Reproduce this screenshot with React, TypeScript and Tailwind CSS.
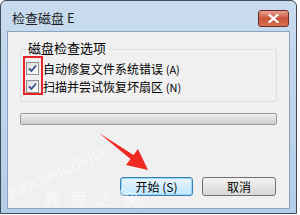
import React from 'react';

const font = { fontFamily: '"Noto Sans CJK SC", "Liberation Sans", sans-serif' };

function CheckRow({ label, hotkey }: { label: string; hotkey: string }) {
  return (
    <div className="flex items-center gap-[4px] h-[17px]">
      <div className="w-[13px] h-[13px] border border-[#8f8f8f] bg-gradient-to-br from-[#dcdcdc] to-[#ffffff] flex items-center justify-center">
        <svg width="9" height="9" viewBox="0 0 9 9">
          <path d="M1 4.5 L3.5 7 L8 1.5" stroke="#3a4f8f" strokeWidth="1.8" fill="none" />
        </svg>
      </div>
      <span className="text-[12px] leading-none text-black">
        {label} <span className="text-[11px]">{hotkey}</span>
      </span>
    </div>
  );
}

export default function App() {
  return (
    <div className="w-[300px] h-[215px] bg-white relative overflow-hidden" style={font}>
      {/* window frame */}
      <div className="w-[297px] h-[214px] rounded-t-[6px] border border-[#3c4a5a] bg-gradient-to-b from-[#c9dcef] to-[#b4cde8] flex flex-col">
        <div className="h-[30px] flex items-center justify-between pl-[11px] pr-[7px]">
          <span className="text-[13px] text-[#1e1e1e] pt-[4px]">检查磁盘 E</span>
          <div className="w-[31px] h-[17px] mt-[4px] rounded-[3px] border border-[#6b2a22] bg-gradient-to-b from-[#e8a293] via-[#c9533c] to-[#d6734f] flex items-center justify-center">
            <svg width="11" height="9" viewBox="0 0 11 9">
              <path d="M1.5 1 L9.5 8 M9.5 1 L1.5 8" stroke="#ffffff" strokeWidth="2.2" strokeLinecap="square" />
            </svg>
          </div>
        </div>
        {/* client area */}
        <div className="mx-[6px] h-[178px] border border-[#8aa3c0] bg-[#f0f0f0] flex flex-col px-[12px] pt-[10px]">
          <div className="relative border border-[#d5dfe5] rounded-[2px] h-[53px] mt-[7px] pl-[5px] pt-[10px]">
            <span className="absolute -top-[9px] left-[5px] px-[2px] bg-[#f0f0f0] text-[13px] leading-none text-black">
              磁盘检查选项
            </span>
            <div className="flex flex-col gap-[1px] relative">
              <CheckRow label="自动修复文件系统错误" hotkey="(A)" />
              <CheckRow label="扫描并尝试恢复坏扇区" hotkey="(N)" />
              <div className="absolute -left-[3px] -top-[4px] w-[20px] h-[39px] border-[2px] border-[#e8242a]" />
            </div>
          </div>
          <div className="mt-[11px] h-[12px] rounded-[2px] border border-[#9a9a9a] bg-gradient-to-b from-[#f2f2f2] via-[#dcdcdc] to-[#cfcfcf]" />
          <div className="flex justify-end gap-[9px] mt-[52px] pr-[1px]">
            <div className="w-[73px] h-[19px] rounded-[3px] border border-[#3c7fb1] bg-gradient-to-b from-[#eaf6fd] to-[#bee6fd] shadow-[inset_0_0_0_1px_#9ad6f5] flex items-center justify-center text-[12px] text-black">
              开始 (S)
            </div>
            <div className="w-[74px] h-[19px] rounded-[3px] border border-[#707070] bg-gradient-to-b from-[#f2f2f2] to-[#d8d8d8] flex items-center justify-center text-[12px] text-black">
              取消
            </div>
          </div>
        </div>
      </div>

      {/* red arrow annotation */}
      <svg className="absolute left-0 top-0 pointer-events-none" width="300" height="215" viewBox="0 0 300 215">
        <path d="M99 133 L133.5 155 L138 149 L148 170 L126 165 L130.5 159 Z" fill="#ee2a22" />
      </svg>

      {/* watermark */}
      <div
        className="absolute left-[12px] top-[184px] text-[17px] text-white/60 origin-bottom-left -rotate-[24deg] pointer-events-none whitespace-nowrap leading-none"
        style={{ fontFamily: '"Liberation Serif", serif' }}
      >
        jiaochengzhijia
      </div>
      <div
        className="absolute left-[122px] top-[180px] text-[16px] text-white/60 origin-top-left rotate-[35deg] pointer-events-none whitespace-nowrap leading-none"
        style={{ fontFamily: '"Liberation Serif", serif' }}
      >
        .com
      </div>
      <div className="absolute left-[44px] top-[190px] text-[16px] text-white/60 tracking-[10px] pointer-events-none leading-none">
        教程之家
      </div>
    </div>
  );
}
